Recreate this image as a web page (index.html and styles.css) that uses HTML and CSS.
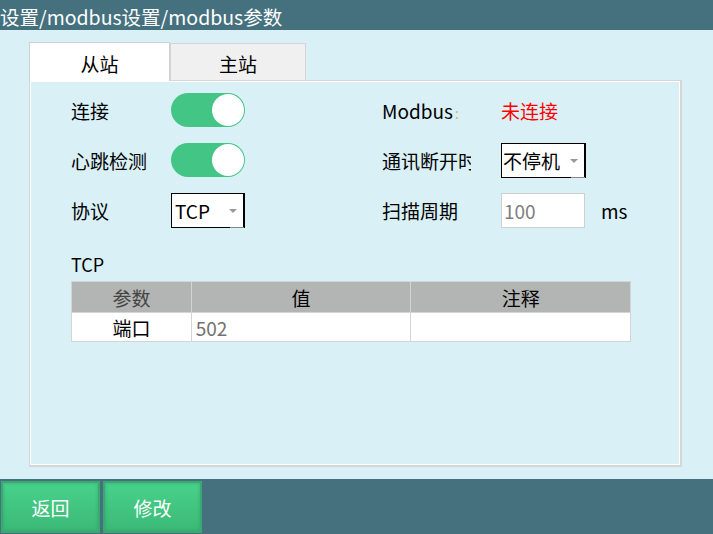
FILE: index.html
```html
<!DOCTYPE html>
<html lang="zh-CN">
<head>
<meta charset="utf-8">
<title>modbus参数</title>
<link rel="stylesheet" href="styles.css">
</head>
<body>
<div class="app">
  <header class="topbar">设置/modbus设置/modbus参数</header>
  <main class="main">
    <div class="tabs">
      <div class="tab active">从站</div>
      <div class="tab">主站</div>
    </div>
    <section class="panel">
      <div class="form">
        <div class="label">连接</div>
        <div class="ctrl"><span class="toggle on"><span class="knob"></span></span></div>
        <div class="spacer"></div>
        <div class="label">Modbus<span class="colon">:</span></div>
        <div class="ctrl"><span class="status">未连接</span></div>

        <div class="label">心跳检测</div>
        <div class="ctrl"><span class="toggle on"><span class="knob"></span></span></div>
        <div class="spacer"></div>
        <div class="label clip">通讯断开时</div>
        <div class="ctrl"><span class="combo wide"><span class="combo-text">不停机</span><span class="arrow"></span><span class="corner"></span></span></div>

        <div class="label">协议</div>
        <div class="ctrl"><span class="combo"><span class="combo-text">TCP</span><span class="arrow"></span><span class="corner"></span></span></div>
        <div class="spacer"></div>
        <div class="label">扫描周期</div>
        <div class="ctrl"><span class="input">100</span><span class="unit">ms</span></div>
      </div>
      <div class="section-title">TCP</div>
      <table class="grid">
        <colgroup><col class="c1"><col class="c2"><col class="c3"></colgroup>
        <thead>
          <tr><th class="dim">参数</th><th>值</th><th>注释</th></tr>
        </thead>
        <tbody>
          <tr><td class="name">端口</td><td class="val">502</td><td></td></tr>
        </tbody>
      </table>
    </section>
  </main>
  <footer class="bottombar">
    <button class="btn">返回</button>
    <button class="btn">修改</button>
  </footer>
</div>
</body>
</html>
```
FILE: styles.css
```css
* { box-sizing: border-box; }
html, body { margin: 0; padding: 0; }
body {
  width: 713px;
  height: 534px;
  overflow: hidden;
  background: #d9f0f7;
  font-family: "Noto Sans CJK SC", "Noto Sans", sans-serif;
  color: #000;
}
.app { display: flex; flex-direction: column; height: 534px; }
.topbar {
  height: 30px;
  background: #45717f;
  color: #fff;
  font-size: 19.5px;
  line-height: 34px;
  padding-left: 0;
  white-space: nowrap;
  overflow: hidden;
}
.main {
  flex: 1;
  padding: 12px 31px 12px 29px;
  display: flex;
  flex-direction: column;
}
.tabs { display: flex; align-items: flex-end; height: 38px; position: relative; z-index: 1; }
.tab {
  width: 136px;
  height: 37px;
  background: #f0f0f0;
  border: 1px solid #d4d4d4;
  border-bottom: none;
  font-size: 19px;
  display: flex;
  align-items: center;
  justify-content: center;
  padding-top: 2px;
}
.tab.active {
  width: 141px;
  height: 39px;
  background: #fff;
  border-color: #d0d0d0;
  margin-bottom: -1px;
}
.panel {
  flex: 1;
  border: 1px solid #d6d6d6;
  border-right-width: 2px;
  border-bottom-width: 2px;
  box-shadow: inset 0 0 0 1px #fff;
  background: #d9f0f7;
  padding: 4px 0 0 41px;
}
.form {
  display: grid;
  grid-template-columns: 100px 74px 137px 119px 1fr;
  grid-auto-rows: 50px;
  align-items: center;
  font-size: 19px;
}
.label { white-space: nowrap; }
.label.clip { width: 89px; overflow: hidden; }
.colon { color: #e8b060; font-size: 14px; margin-left: 2px; }
.ctrl { display: flex; align-items: center; }
.status { color: #ff0000; }
.toggle {
  width: 74px;
  height: 34px;
  border-radius: 17px;
  background: #42c585;
  position: relative;
  display: block;
}
.knob {
  position: absolute;
  right: 1px;
  top: 1px;
  width: 32px;
  height: 32px;
  border-radius: 50%;
  background: #fff;
}
.combo {
  position: relative;
  width: 74px;
  height: 35px;
  background: #fff;
  border: 1px solid #000;
  border-right-width: 2px;
  display: flex;
  align-items: center;
  padding-left: 3px;
  font-size: 19px;
}
.combo.wide { width: 85px; padding-left: 1px; }
.arrow {
  position: absolute;
  right: 6px;
  top: 15px;
  width: 0;
  height: 0;
  border-left: 4px solid transparent;
  border-right: 4px solid transparent;
  border-top: 4px solid #999;
}
.corner {
  position: absolute;
  right: -1px;
  bottom: -1px;
  width: 14px;
  height: 1px;
  background: #888;
}
.input {
  width: 84px;
  height: 35px;
  background: #fff;
  border: 1px solid #cfcfcf;
  color: #808080;
  display: flex;
  align-items: center;
  padding-left: 2px;
  font-size: 19px;
}
.unit { margin-left: 16px; }
.section-title {
  font-size: 18px;
  margin-top: 17px;
  height: 24px;
  line-height: 24px;
}
.grid {
  margin-top: 5px;
  border-collapse: collapse;
  width: 560px;
  font-size: 19px;
}
.grid col.c1 { width: 120px; }
.grid col.c2 { width: 220px; }
.grid col.c3 { width: 220px; }
.grid th, .grid td {
  border: 1.5px solid #d4d4d4;
  padding: 0;
}
.grid th {
  background: #b3b5b4;
  height: 31px;
  font-weight: normal;
  color: #000;
}
.grid th.dim { color: #444; }
.grid td { background: #fff; height: 29px; }
.grid td.name { text-align: center; }
.grid td.val { color: #707070; padding-left: 4px; }
.bottombar {
  height: 55px;
  background: #45717f;
  display: flex;
  gap: 3px;
  padding: 2px 1px 1px 1px;
}
.btn {
  width: 99px;
  height: 52px;
  border: none;
  box-shadow: inset 0 0 0 2px #3aa870, inset 0 0 3px 3px rgba(40,150,90,0.35);
  background: linear-gradient(#48d38c, #3bb876);
  color: #fff;
  font-family: "Noto Sans CJK SC", sans-serif;
  font-size: 19px;
  padding: 0;
}
```
